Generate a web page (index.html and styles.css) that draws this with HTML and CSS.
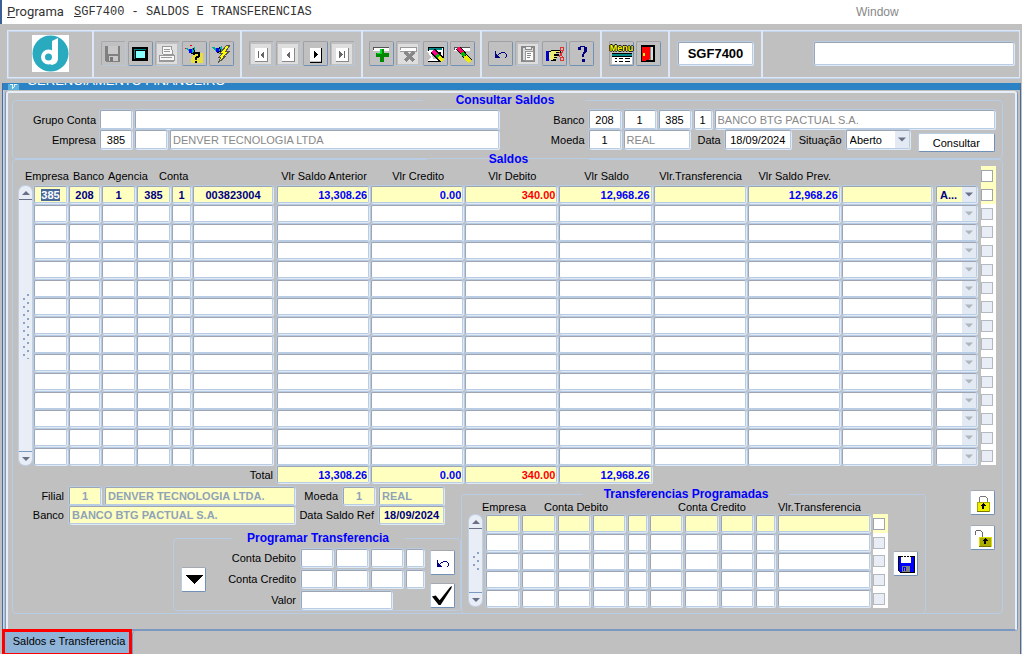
FILE: index.html
```html
<!DOCTYPE html>
<html lang="pt-BR">
<head>
<meta charset="utf-8">
<title>SGF7400 - Saldos e Transferencias</title>
<link rel="stylesheet" href="styles.css">
</head>
<body>
<svg class="defs" aria-hidden="true">
  <symbol id="i-undo" viewBox="0 0 20 20"><path d="M4 7h1v3h1v1h1v1h1v1h1v1H4z" fill="#000080"/><path d="M7 10h1V9h2V8h4v1h1v1h1v3h-1v1h-1v-1h1v-3h-1V9h-4v1H8v1H7z" fill="#000080"/></symbol>
</svg>
<nav class="menubar">
  <a href="#programa" class="menu-program"><u>P</u>rograma</a>
  <span class="menu-title"><u>S</u>GF7400 - SALDOS E TRANSFERENCIAS</span>
  <a href="#window" class="menu-window">Window</a>
</nav>

<div class="toolbar">
  <div class="tools tools-logo">
    <svg class="logo" viewBox="0 0 37 37" role="img" aria-label="Logo"><rect width="37" height="37" fill="#fff"/><circle cx="18.500" cy="18.500" r="18" fill="#2aaabf"/><circle cx="16.500" cy="22" r="5.500" fill="none" stroke="#fff" stroke-width="4"/><path d="M20 6c2-1 4-2 6-3v20c0 4-2 6-6 7l-2-1c2-2 2-5 2-8V8z" fill="#fff"/></svg>
  </div>
  <div class="tools tools-file">
    <button class="tool off" aria-label="Salvar"><svg viewBox="0 0 20 20"><path d="M2 2h15v16H3l-1-1z" fill="#808080"/><path d="M5 2h10v8H5zM6 12h9v5H6z" fill="#c8c8c8"/><path d="M7 13h3v4H7z" fill="#777"/></svg></button>
    <button class="tool" aria-label="Tela"><svg viewBox="0 0 20 20"><path d="M3 4h14v12H3z" fill="#008080" stroke="#000" stroke-width="2"/><path d="M5 6h10v8H5z" fill="#8ff" stroke="#000"/></svg></button>
    <button class="tool off light" aria-label="Imprimir"><svg viewBox="0 0 20 20"><path d="M5 2h9l2 8H6zM2 11h15v5H2z" fill="#f8f8f8" stroke="#999"/><path d="M7 5h6M7 7h6M4 13h11M2 17h15" stroke="#999"/></svg></button>
    <button class="tool" aria-label="Consultar"><svg viewBox="0 0 20 20"><path d="M10 9h9v10H7v-4z" fill="#e8e03c"/><path d="M1 4l6 1 4-2v5L7 9 2 5z" fill="#0aa"/><path d="M5 5h3v4H5z" fill="#00f"/><path d="M6 1h2v1H6zM1 4h1v1H1z" fill="#e00"/><path d="M9 4l2 4-4 2" fill="none" stroke="#000"/><path d="M10 11V9h5v3l-3 2v2M12 17v2" fill="none" stroke="#000" stroke-width="2"/></svg></button>
    <button class="tool" aria-label="Executar"><svg viewBox="0 0 20 20"><path d="M1 3l6 1 4-2v5L7 9 2 5z" fill="#0aa"/><path d="M5 4h3v4H5z" fill="#00f"/><path d="M8 3l2 4-4 2" fill="none" stroke="#000"/><path d="M16 1h3l-4 6h4l-6 5h2l-8 7 3-6H8l4-4H9z" fill="#ff0" stroke="#555"/></svg></button>
  </div>
  <div class="tools tools-nav">
    <button class="tool off light" aria-label="Primeiro"><svg viewBox="0 0 20 20"><path d="M4 4h12v13H4z" fill="#fff"/><path d="M16 4v13H4" fill="none" stroke="#888"/><path d="M7 7h1v7H7zM13 7v7l-4-3z" fill="#666"/></svg></button>
    <button class="tool off light" aria-label="Anterior"><svg viewBox="0 0 20 20"><path d="M4 4h12v13H4z" fill="#fff"/><path d="M16 4v13H4" fill="none" stroke="#888"/><path d="M12 7v7l-4-3z" fill="#666"/></svg></button>
    <button class="tool" aria-label="Proximo"><svg viewBox="0 0 20 20"><path d="M5 4h11v13H5z" fill="#fff"/><path d="M16 4v14H5" fill="none" stroke="#000"/><path d="M9 7v7l4-3z" fill="#000"/></svg></button>
    <button class="tool off light" aria-label="Ultimo"><svg viewBox="0 0 20 20"><path d="M4 4h12v13H4z" fill="#fff"/><path d="M16 4v13H4" fill="none" stroke="#888"/><path d="M7 7v7l4-3zM12 7h1v7h-1z" fill="#666"/></svg></button>
  </div>
  <div class="tools tools-record">
    <button class="tool" aria-label="Inserir"><svg viewBox="0 0 20 20"><path d="M2 3h16v4H2z" fill="#fff"/><path d="M2 6V3h16" fill="none" stroke="#555"/><path d="M9 5h4v4h5v4h-5v5H9v-5H5V9h4z" fill="#080"/><path d="M9 5h2v5H6V9h3z" fill="#0d2"/></svg></button>
    <button class="tool off light" aria-label="Remover"><svg viewBox="0 0 20 20"><path d="M2 3h16v4H2z" fill="#fff"/><path d="M2 6V3h16v4H2" fill="none" stroke="#999"/><path d="M7 8l9 9M16 8l-9 9" stroke="#888" stroke-width="3"/></svg></button>
    <button class="tool" aria-label="Limpar registro"><svg viewBox="0 0 20 20"><path d="M3 3h15v10h-3V8H6L3 7z" fill="#fff" stroke="#000"/><path d="M4 4h13v2H4z" fill="#088"/><path d="M2 7l4 6-3 4h14v-2H8l-2-8z" fill="#fff"/><path d="M3 17h13" stroke="#000"/><path d="M8 7l9 9" stroke="#000" stroke-width="6"/><path d="M8 7l4 4" stroke="#f08" stroke-width="4"/><path d="M12 11l2 2" stroke="#0b0" stroke-width="4"/><path d="M14 13l4 4" stroke="#ee0" stroke-width="4"/></svg></button>
    <button class="tool" aria-label="Limpar campo"><svg viewBox="0 0 20 20"><path d="M2 3h16v4H2z" fill="#fff"/><path d="M2 6V3h16" fill="none" stroke="#555"/><path d="M6 4l12 13" stroke="#000" stroke-width="5"/><path d="M6 4l5 5" stroke="#f06" stroke-width="3"/><path d="M10 9l3 3" stroke="#0b0" stroke-width="4"/><path d="M13 12l5 6" stroke="#ee0" stroke-width="4"/></svg></button>
  </div>
  <div class="tools tools-edit">
    <button class="tool" aria-label="Desfazer"><svg><use href="#i-undo"/></svg></button>
    <button class="tool off light" aria-label="Colar"><svg viewBox="0 0 20 20"><path d="M4 3h12v14H4z" fill="#ddd" stroke="#888" stroke-width="2"/><path d="M7 7h8v9H7z" fill="#fff" stroke="#999"/><path d="M7 2h6v3H7z" fill="#eee" stroke="#888"/><path d="M9 9h4M9 11h4M9 13h3" stroke="#888"/></svg></button>
    <button class="tool" aria-label="Lista de valores"><svg viewBox="0 0 20 20"><path d="M1 7h3v10H1z" fill="#00c"/><path d="M4 8l4-2h7v2h-4v2h2v2h-1v2h-1v2H6l-2-1z" fill="#ee7"/><path d="M4 8l4-2h7v2h-4M9 10h4v1H9M9 13h3M8 15h3M6 16h5" fill="none" stroke="#000"/><circle cx="17" cy="5" r="2" fill="none" stroke="#d33"/><circle cx="17" cy="15" r="2" fill="none" stroke="#d33"/><path d="M14 8l4 5M18 7l-4 6" stroke="#d33"/></svg></button>
    <button class="tool" aria-label="Ajuda"><svg viewBox="0 0 20 20"><path d="M6 3h2V2h5v1h2v5h-1v1h-1v1h-1v3h-2v-3h1V8h1V3H9v3H6zM10 15h3v3h-3z" fill="#000080"/></svg></button>
  </div>
  <div class="tools tools-exit">
    <button class="tool menu-tool" aria-label="Menu"><span>Menu</span><svg class="list-icon" viewBox="0 0 20 11"><path d="M0 0h20v11H0z" fill="#fff"/><path d="M0 1h20v2H0z" fill="#088"/><path d="M0 0.500h20M0 3.500h20M3 5.500h2M7 5.500h4M13 5.500h5M3 8.500h2M7 8.500h4M13 8.500h5" stroke="#000"/></svg></button>
    <button class="tool" aria-label="Sair"><svg viewBox="0 0 20 20"><path d="M3 2h12v15H3z" fill="#ddd" stroke="#000" stroke-width="2"/><path d="M10 3h2v13h-2z" fill="#888"/><path d="M3 3h8v12l-5 2H3z" fill="#f00"/><path d="M4 9h2v3H4z" fill="#ff0"/></svg></button>
  </div>
  <div class="tools tools-code"><input class="code" value="SGF7400" aria-label="Codigo do programa"></div>
  <div class="tools tools-user"><input class="user" aria-label="Usuario"></div>
</div>

<main class="window">
  <header class="titlebar"><svg class="app-icon" viewBox="0 0 12 7"><path d="M0 0h12v7H0z" fill="#5db2dc"/><path d="M2 1h3v3h2V1h3M5 4v2" fill="none" stroke="#fff"/></svg>GERENCIAMENTO FINANCEIRO</header>
  <div class="panel">
    <fieldset class="group query">
      <legend class="legend-wide">Consultar Saldos</legend>
      <div class="query-side">
        <div class="line">
          <label class="lead" for="grupo">Grupo Conta</label><input id="grupo" class="w33"><input class="grow" aria-label="Nome do grupo">
        </div>
        <div class="line">
          <label class="lead" for="empresa">Empresa</label><input id="empresa" class="w33 center" value="385"><input class="w33" aria-label="Filial"><input class="grow muted" value="DENVER TECNOLOGIA LTDA" aria-label="Nome da empresa" readonly>
        </div>
      </div>
      <div class="query-side">
        <div class="line">
          <label class="lead" for="banco">Banco</label><input id="banco" class="w33 center" value="208"><input class="w33 center" value="1" aria-label="Agencia"><input class="w33 center" value="385" aria-label="Conta"><input class="w20 center" value="1" aria-label="Digito"><input class="grow muted" value="BANCO BTG PACTUAL S.A." aria-label="Nome do banco" readonly>
        </div>
        <div class="line">
          <label class="lead" for="moeda">Moeda</label><input id="moeda" class="w33 center" value="1"><input class="w67 muted" value="REAL" aria-label="Nome da moeda" readonly>
          <label class="inline" for="data">Data</label><input id="data" class="w67 center" value="18/09/2024">
          <label class="inline" for="situacao">Situação</label><select id="situacao"><option>Aberto</option></select>
          <button class="push">Consultar</button>
        </div>
      </div>
    </fieldset>

    <fieldset class="group balances">
      <legend class="legend-wide">Saldos</legend>
      <div class="scroll-area">
        <div class="scrollbar main-scroll"><button class="up" aria-label="Subir"></button><div class="track"><i class="grip"></i></div><button class="down" aria-label="Descer"></button></div>
        <table class="grid saldos">
          <colgroup><col class="c35"><col class="c33"><col class="c35"><col class="c35"><col class="c21"><col class="c84"><col><col><col><col><col><col><col><col class="c45"><col class="c15"></colgroup>
          <thead><tr>
            <th class="head-end"><span>Empresa</span></th><th class="head-banco"><span>Banco</span></th><th class="head-agencia"><span>Agencia</span></th><th class="head-conta" colspan="3"><span>Conta</span></th>
            <th><span>Vlr Saldo Anterior</span></th><th><span>Vlr Credito</span></th><th><span>Vlr Debito</span></th><th><span>Vlr Saldo</span></th><th><span>Vlr.Transferencia</span></th><th><span>Vlr Saldo Prev.</span></th><th></th><th></th>
            <th class="check-cell"><input type="checkbox" aria-label="Marcar todos"></th>
          </tr></thead>
          <tbody id="saldos-rows"></tbody>
          <tfoot><tr>
            <th colspan="6" class="total-label">Total</th>
            <td><input class="money" value="13,308.26" aria-label="Total saldo anterior"></td><td><input class="money" value="0.00" aria-label="Total credito"></td><td><input class="money debit" value="340.00" aria-label="Total debito"></td><td><input class="money" value="12,968.26" aria-label="Total saldo"></td><td colspan="5"></td>
          </tr></tfoot>
        </table>
      </div>

      <div class="lower">
        <div class="lower-left">
          <div class="details">
            <label for="d-filial">Filial</label><input id="d-filial" class="pale center" value="1"><input class="pale" value="DENVER TECNOLOGIA LTDA." aria-label="Nome da filial">
            <label for="d-moeda">Moeda</label><input id="d-moeda" class="pale center" value="1"><input class="pale" value="REAL" aria-label="Nome da moeda">
            <label for="d-banco">Banco</label><input id="d-banco" class="pale span2" value="BANCO BTG PACTUAL S.A.">
            <label for="d-data" class="span2">Data Saldo Ref</label><input id="d-data" class="date center" value="18/09/2024">
          </div>
          <fieldset class="group program">
            <legend>Programar Transferencia</legend>
            <button class="square" aria-label="Transferir"><svg viewBox="0 0 20 20"><path d="M1 6h18l-9 9z"/></svg></button>
            <div class="transfer-form">
              <div class="line"><label for="t-debito">Conta Debito</label><input id="t-debito" class="w33"><input class="w33" aria-label="Agencia debito"><input class="w33" aria-label="Conta debito"><input class="w20" aria-label="Digito debito"></div>
              <div class="line"><label for="t-credito">Conta Credito</label><input id="t-credito" class="w33"><input class="w33" aria-label="Agencia credito"><input class="w33" aria-label="Conta credito"><input class="w20" aria-label="Digito credito"></div>
              <div class="line"><label for="t-valor">Valor</label><input id="t-valor" class="w92"></div>
            </div>
            <div class="stack">
              <button class="square" aria-label="Desfazer"><svg><use href="#i-undo"/></svg></button>
              <button class="square" aria-label="Confirmar"><svg class="check-icon" viewBox="0 0 24 24"><path d="M1 13l4-1 4 5L20 3l2-1-1 3L10 22H8z"/></svg></button>
            </div>
          </fieldset>
        </div>

        <fieldset class="group scheduled">
          <legend>Transferencias Programadas</legend>
          <div class="scrollbar small-scroll"><button class="up" aria-label="Subir"></button><div class="track"><i class="grip short"></i></div><button class="down" aria-label="Descer"></button></div>
          <table class="grid transfers">
            <colgroup><col class="c36"><col class="c36"><col class="c35"><col class="c35"><col class="c22"><col class="c35"><col class="c36"><col class="c35"><col class="c22"><col><col class="c15"></colgroup>
            <thead><tr><th><span>Empresa</span></th><th class="head-debit" colspan="4"><span>Conta Debito</span></th><th class="head-credit" colspan="4"><span>Conta Credito</span></th><th class="head-start"><span>Vlr.Transferencia</span></th><th></th></tr></thead>
            <tbody id="transfer-rows"></tbody>
          </table>
          <button class="square" aria-label="Gravar"><svg viewBox="0 0 20 20"><path d="M2 2h16v16H4l-2-2z" fill="#00f" stroke="#000"/><path d="M5 2h10v7H5z" fill="#fff"/><path d="M6 12h8v6H6z" fill="#808080"/><path d="M7 13h3v4H7z" fill="#00f"/><path d="M8 14h1v3H8z" fill="#888"/><path d="M5 2h10" stroke="#000" stroke-dasharray="2 1"/></svg></button>
        </fieldset>

        <div class="locks">
          <button class="square" aria-label="Bloquear"><svg viewBox="0 0 20 20"><path d="M6 9V5l2-2h4l2 2v4" fill="none" stroke="#777"/><path d="M4 9h12v9H4z" fill="#ee0" stroke="#aa0"/><path d="M4 18h12" stroke="#770"/><path d="M10 10l3 3h-2v3H9v-3H7z" fill="#000"/></svg></button>
          <button class="square" aria-label="Desbloquear"><svg viewBox="0 0 20 20"><path d="M2 7V4l2-2h3l2 2v5" fill="none" stroke="#666"/><path d="M6 9h12v9H6z" fill="#aa0" stroke="#dd0"/><path d="M6 18h12" stroke="#770"/><path d="M12 10l3 3h-2v3h-2v-3H9z" fill="#000"/></svg></button>
        </div>
      </div>
    </fieldset>
  </div>
  <div class="tabs"><button class="tab">Saldos e Transferencia</button><div class="tab-rest"></div></div>
</main>
<script src="app.js"></script>
</body>
</html>
```
FILE: styles.css
```css
* { box-sizing: border-box; }
body {
  margin: 0;
  min-height: 100vh;
  display: flex;
  flex-direction: column;
  background: #c0c0c0;
  font: 11px/14px "Liberation Sans", Arial, sans-serif;
  color: #000;
}
input, select, button { font: inherit; color: inherit; margin: 0; border-radius: 2px; }
input, select {
  min-width: 0;
  height: 19px;
  padding: 0 2px;
  background: #fff;
  border: 1px solid;
  border-color: #9ea4b0 #b8cce4 #b8cce4 #9ea4b0;
  box-shadow: 1px 1px 0 #e0eaf6, 0 0 0 1px #b8cce4;
  outline: 0;
}
button { padding: 0; border: 1px solid; }
svg { display: block; shape-rendering: crispEdges; }
.defs { position: absolute; width: 0; height: 0; }

/* Menu bar */
.menubar {
  display: flex;
  align-items: center;
  height: 24px;
  padding-left: 5px;
  background: #fff;
  border-left: 2px solid #3b5f95;
  color: #333;
}
.menubar a { color: inherit; text-decoration: none; }
.menu-program { flex: 0 0 67px; font: 13px/16px Roboto, sans-serif; }
.menu-title { flex: 1; font: 12px/16px "Liberation Mono", monospace; }
.menubar .menu-window { width: 166px; font-size: 12px; color: #888; }

/* Toolbar */
.toolbar {
  display: flex;
  height: 48px;
  margin: 6px 2px 5px 7px;
  border: 1px solid #dce8f8;
  box-shadow: inset 1px 1px 0 #c4d4ea, 0 1px 0 #c4d4ea;
}
.tools {
  display: flex;
  align-items: center;
  justify-content: center;
  gap: 2px;
  padding-bottom: 1px;
  border-right: 2px solid #dce8f8;
}
.tools-logo { width: 86px; }
.tools-file { width: 148px; }
.tools-nav { width: 121px; }
.tools-record { width: 119px; }
.tools-edit { width: 120px; }
.tools-exit { width: 68px; }
.tools-code { width: 93px; }
.tools-user { flex: 1; justify-content: flex-end; padding-right: 5px; border: 0; }
.logo { width: 37px; height: 37px; shape-rendering: auto; }
.tool {
  width: 25px;
  height: 25px;
  display: flex;
  flex-direction: column;
  align-items: center;
  justify-content: center;
  background: #c0c0c0;
  border-color: #a0a0a4 #7090b8 #7090b8 #a0a0a4;
}
.tool svg { width: 20px; height: 20px; }
.tool.off { border-color: #a8a8ac #b8c8dc #b8c8dc #a8a8ac; }
.tool.light svg { background: #dedede; }
.menu-tool span {
  font-size: 9px;
  line-height: 10px;
  font-weight: bold;
  color: #ff0;
  text-shadow: 1px 0 #000, -1px 0 #000, 0 1px #000, 0 -1px #000;
}
.tool .list-icon { height: 11px; }
.code { width: 75px; height: 23px; text-align: center; font-size: 13px; font-weight: bold; }
.user { width: 200px; height: 23px; }

/* Window */
.window {
  flex: 1;
  display: flex;
  flex-direction: column;
  margin: 0 1px 0 2px;
  border: 1px solid #4a6a9a;
  border-top: 0;
  box-shadow: inset 1px 0 0 #c4d4ea;
}
.titlebar {
  display: flex;
  align-items: flex-end;
  gap: 8px;
  height: 7px;
  padding-left: 5px;
  overflow: hidden;
  background: #2b83c6;
  color: #fff;
  font-size: 13px;
  line-height: 18px;
}
.app-icon { width: 11px; height: 6px; }
.panel {
  margin: 1px 3px 0 3px;
  padding: 0 12px 15px 4px;
  border: 2px solid #e8eef8;
  border-bottom-color: #7a98c0;
  border-radius: 3px;
  box-shadow: -1px 0 0 #7a98c0, 1px 0 0 #7a98c0;
}

/* Framed groups */
.group { min-width: 0; margin: 0; padding: 0; border: 1px solid #b8cce4; border-radius: 4px; }
legend { margin: 0 auto; padding: 0; text-align: center; font-size: 12px; font-weight: bold; line-height: 14px; color: #00f; }
.legend-wide { width: 162px; padding-left: 2px; }
.line { display: flex; align-items: center; gap: 3px; }
.w33 { width: 32px; }
.w20 { width: 18px; }
.w67 { width: 66px; }
.w92 { width: 91px; }
.grow { flex: 1; }
.center { text-align: center; }
.muted { color: #888; }

.query {
  display: grid;
  grid-template-columns: 486fr 497fr;
  padding: 3px 7px 9px 0;
}
.query-side { display: flex; flex-direction: column; gap: 1px; }
.query-side .lead { width: 83px; text-align: right; margin-right: 1px; }
.query-side + .query-side .lead { width: 86px; }
.inline { margin-left: 5px; margin-right: 1px; }
select {
  appearance: none;
  padding: 0 15px 0 3px;
  background: #fff url("data:image/svg+xml,%3Csvg xmlns='http://www.w3.org/2000/svg' width='14' height='20'%3E%3Cpath d='M0 0h14v20H0z' fill='%23e4eaf4'/%3E%3Cpath d='M3 8h8l-4 4z' fill='%23687088'/%3E%3C/svg%3E") right center no-repeat;
}
select:disabled {
  opacity: 1;
  background-image: url("data:image/svg+xml,%3Csvg xmlns='http://www.w3.org/2000/svg' width='14' height='20'%3E%3Cpath d='M0 0h14v20H0z' fill='%23e4eaf4'/%3E%3Cpath d='M3 8h8l-4 4z' fill='%23b0b4bc'/%3E%3C/svg%3E");
}
#situacao { width: 64px; }
.push {
  flex: 1;
  height: 19px;
  margin: 0 0 -3px 5px;
  align-self: flex-end;
  background: #fff;
  border-color: #b8cce4 #7090b8 #7090b8 #b8cce4;
}

/* Scroll bars */
.scrollbar {
  display: flex;
  flex-direction: column;
  width: 13px;
  margin-right: 2px;
  background: #e8edf6;
  border-radius: 6px;
  box-shadow: 0 0 0 1px #c0d0e6;
}
.scrollbar button {
  height: 14px;
  display: grid;
  place-items: center;
  background: none;
  border: 0 solid #687088;
}
.scrollbar .up { border-bottom-width: 1px; border-radius: 6px 6px 0 0; }
.scrollbar .down { border-top: 1px solid #7a98c0; border-radius: 0 0 6px 6px; }
.scrollbar button::before { content: ""; border: 4px solid transparent; }
.scrollbar .up::before { border-top: 0; border-bottom-color: #687088; }
.scrollbar .down::before { border-bottom: 0; border-top-color: #687088; }
.track { flex: 1; display: grid; place-items: center; }
.grip {
  width: 8px;
  height: 66px;
  background: radial-gradient(circle at 6px 2px, #8ba4c6 1px, transparent 1px), radial-gradient(circle at 2px 6px, #8ba4c6 1px, transparent 1px);
  background-size: 8px 8px;
}
.grip.short { height: 20px; }

/* Record grids */
.balances { margin-top: -7px; padding: 0 6px; }
.scroll-area { display: flex; }
.main-scroll { margin-top: 20px; margin-bottom: 19px; }
.grid { flex: 1; width: 0; table-layout: fixed; border-spacing: 0; }
.grid td { height: 19px; padding: 0 2px 0 0; }
.grid tbody tr:nth-child(3n) td { height: 18px; }
.grid td input:not([type]), .grid td select { display: block; width: 100%; height: 17px; }
.grid tbody tr:first-child input:not([type]), .grid tbody tr:first-child select { background-color: #ffffc0; }
.grid th { height: 19px; padding: 0; font-weight: normal; }
.grid th span { display: flex; justify-content: center; white-space: nowrap; }
.grid th.head-end span { justify-content: flex-end; }
.grid th.head-start span { justify-content: flex-start; }
.grid th.head-banco span { justify-content: flex-start; padding-left: 4px; }
.grid th.head-agencia span { justify-content: flex-start; padding-left: 6px; }
.grid th.head-conta span { justify-content: flex-start; padding-left: 22px; }
.grid th.head-debit span { justify-content: flex-start; padding-left: 22px; }
.grid th.head-credit span { justify-content: flex-start; padding-left: 28px; }
.c15 { width: 15px; } .c21 { width: 21px; } .c22 { width: 22px; } .c33 { width: 33px; }
.c35 { width: 35px; } .c36 { width: 36px; } .c45 { width: 45px; } .c84 { width: 84px; }
.grid td.wide-gap { padding-right: 4px; }
.saldos tbody input, .saldos tbody select { font-weight: bold; color: #000080; }
.saldos tbody input { text-align: center; }
.grid input.money { text-align: right; font-weight: bold; color: #00f; padding-right: 1px; }
.grid input.debit { color: #f00; }
.saldos tfoot input { background: #ffffc0; }
.grid th.total-label { text-align: right; padding-right: 4px; height: 19px; }
.saldos tfoot td { vertical-align: middle; }
.saldos select { padding-left: 3px; }
.grid .check-cell { padding: 0; background: #fff; vertical-align: middle; text-align: left; }
.grid thead .check-cell, .grid tbody tr:first-child .check-cell { background: #ffffc0; }
input[type="checkbox"] {
  appearance: none;
  display: block;
  width: 12px;
  height: 12px;
  padding: 0;
  border: 1px solid #a0a4ac;
  border-radius: 0;
  box-shadow: none;
}
input[type="checkbox"]:disabled { background: #e8edf6; border-color: #b4b8c0; }
::selection { background: #48689a; color: #fff; }

/* Lower area */
.lower {
  display: grid;
  grid-template-columns: 443fr 465px 70px;
  margin-top: 3px;
  margin-bottom: -1px;
}
.details {
  display: grid;
  grid-template-columns: 46px 32px 1fr 40px 32px 65px;
  gap: 1px 4px;
  align-items: center;
  padding: 0 17px 7px 0;
}
.details label { text-align: right; padding-right: 1px; white-space: nowrap; }
.details input { width: 100%; height: 18px; font-weight: bold; background: #ffffc0; }
.details .pale { color: #8fa3b8; }
.details .date { color: #000080; }
.span2 { grid-column: span 2; }
.program {
  display: flex;
  align-items: center;
  gap: 6px;
  width: 288px;
  margin-left: auto;
  padding: 4px 5px 1px 7px;
}
.program legend { width: 173px; }
.square {
  flex: none;
  width: 25px;
  height: 25px;
  display: grid;
  place-items: center;
  background: #fff;
  border-color: #a4a8b0 #7090b8 #7090b8 #b8cce4;
}
.square svg { width: 20px; height: 20px; }
.square .check-icon { width: 23px; height: 23px; shape-rendering: auto; }
.transfer-form { flex: 1; display: flex; flex-direction: column; gap: 3px; }
.transfer-form label { width: 84px; text-align: right; margin-right: 2px; }
.transfer-form input { height: 18px; }
.stack { display: flex; flex-direction: column; gap: 8px; }
.scheduled {
  display: flex;
  align-items: flex-start;
  padding: 0 7px 5px 7px;
}
.scheduled legend { width: 206px; margin-left: 114px; }
.small-scroll { height: 91px; margin-top: 14px; margin-right: 4px; }
.transfers th { height: 13px; line-height: 13px; }
.transfers td { padding-right: 3px; }
.scheduled .square { margin: 50px 0 0 5px; }
.locks {
  display: flex;
  flex-direction: column;
  align-items: flex-end;
  gap: 10px;
  padding: 3px 1px 0 0;
}

/* Bottom tabs */
.tabs { flex: 1; display: flex; min-height: 25px; }
.tab {
  width: 130px;
  margin: -2px 0 0 -1px;
  padding: 0 0 3px 4px;
  background: #90b4d8;
  border: 3px solid #f00;
  border-radius: 0;
}
.tab-rest { flex: 1; border-left: 1px solid #7a98c0; border-radius: 4px 0 0 0; }
```
FILE: app.js
```js
const labels = ["Empresa", "Banco", "Agencia", "Conta", "Digito", "Numero", "Saldo anterior", "Credito", "Debito", "Saldo", "Transferencia", "Saldo previsto", "Observacao"];
const first = ["385", "208", "1", "385", "1", "003823004", "13,308.26", "0.00", "340.00", "12,968.26", "", "12,968.26", ""];

function cell(label, value, className, gap) {
  return `<td class="${gap}"><input class="${className}" value="${value}" aria-label="${label}"></td>`;
}
function check(enabled) {
  return `<td class="check-cell"><input type="checkbox" aria-label="Marcar" ${enabled ? "" : "disabled"}></td>`;
}

let rows = "";
for (let r = 0; r < 15; r++) {
  const cells = labels.map((label, i) => cell(
    label,
    r === 0 ? first[i] : "",
    (i > 5 ? "money" : "") + (i === 8 ? " debit" : ""),
    i === 5 || i === 12 ? "wide-gap" : ""
  )).join("");
  const status = `<td class="wide-gap"><select aria-label="Situacao" ${r ? "disabled" : ""}><option>${r ? "" : "A..."}</option></select></td>`;
  rows += `<tr>${cells}${status}${check(r === 0)}</tr>`;
}
document.getElementById("saldos-rows").innerHTML = rows;

const transferLabels = ["Empresa", "Banco debito", "Agencia debito", "Conta debito", "Digito debito", "Banco credito", "Agencia credito", "Conta credito", "Digito credito", "Valor"];
rows = "";
for (let r = 0; r < 5; r++) {
  rows += `<tr>${transferLabels.map(label => cell(label, "", "", "")).join("")}${check(r === 0)}</tr>`;
}
document.getElementById("transfer-rows").innerHTML = rows;

const active = document.querySelector("#saldos-rows input");
active.focus();
active.select();
```
